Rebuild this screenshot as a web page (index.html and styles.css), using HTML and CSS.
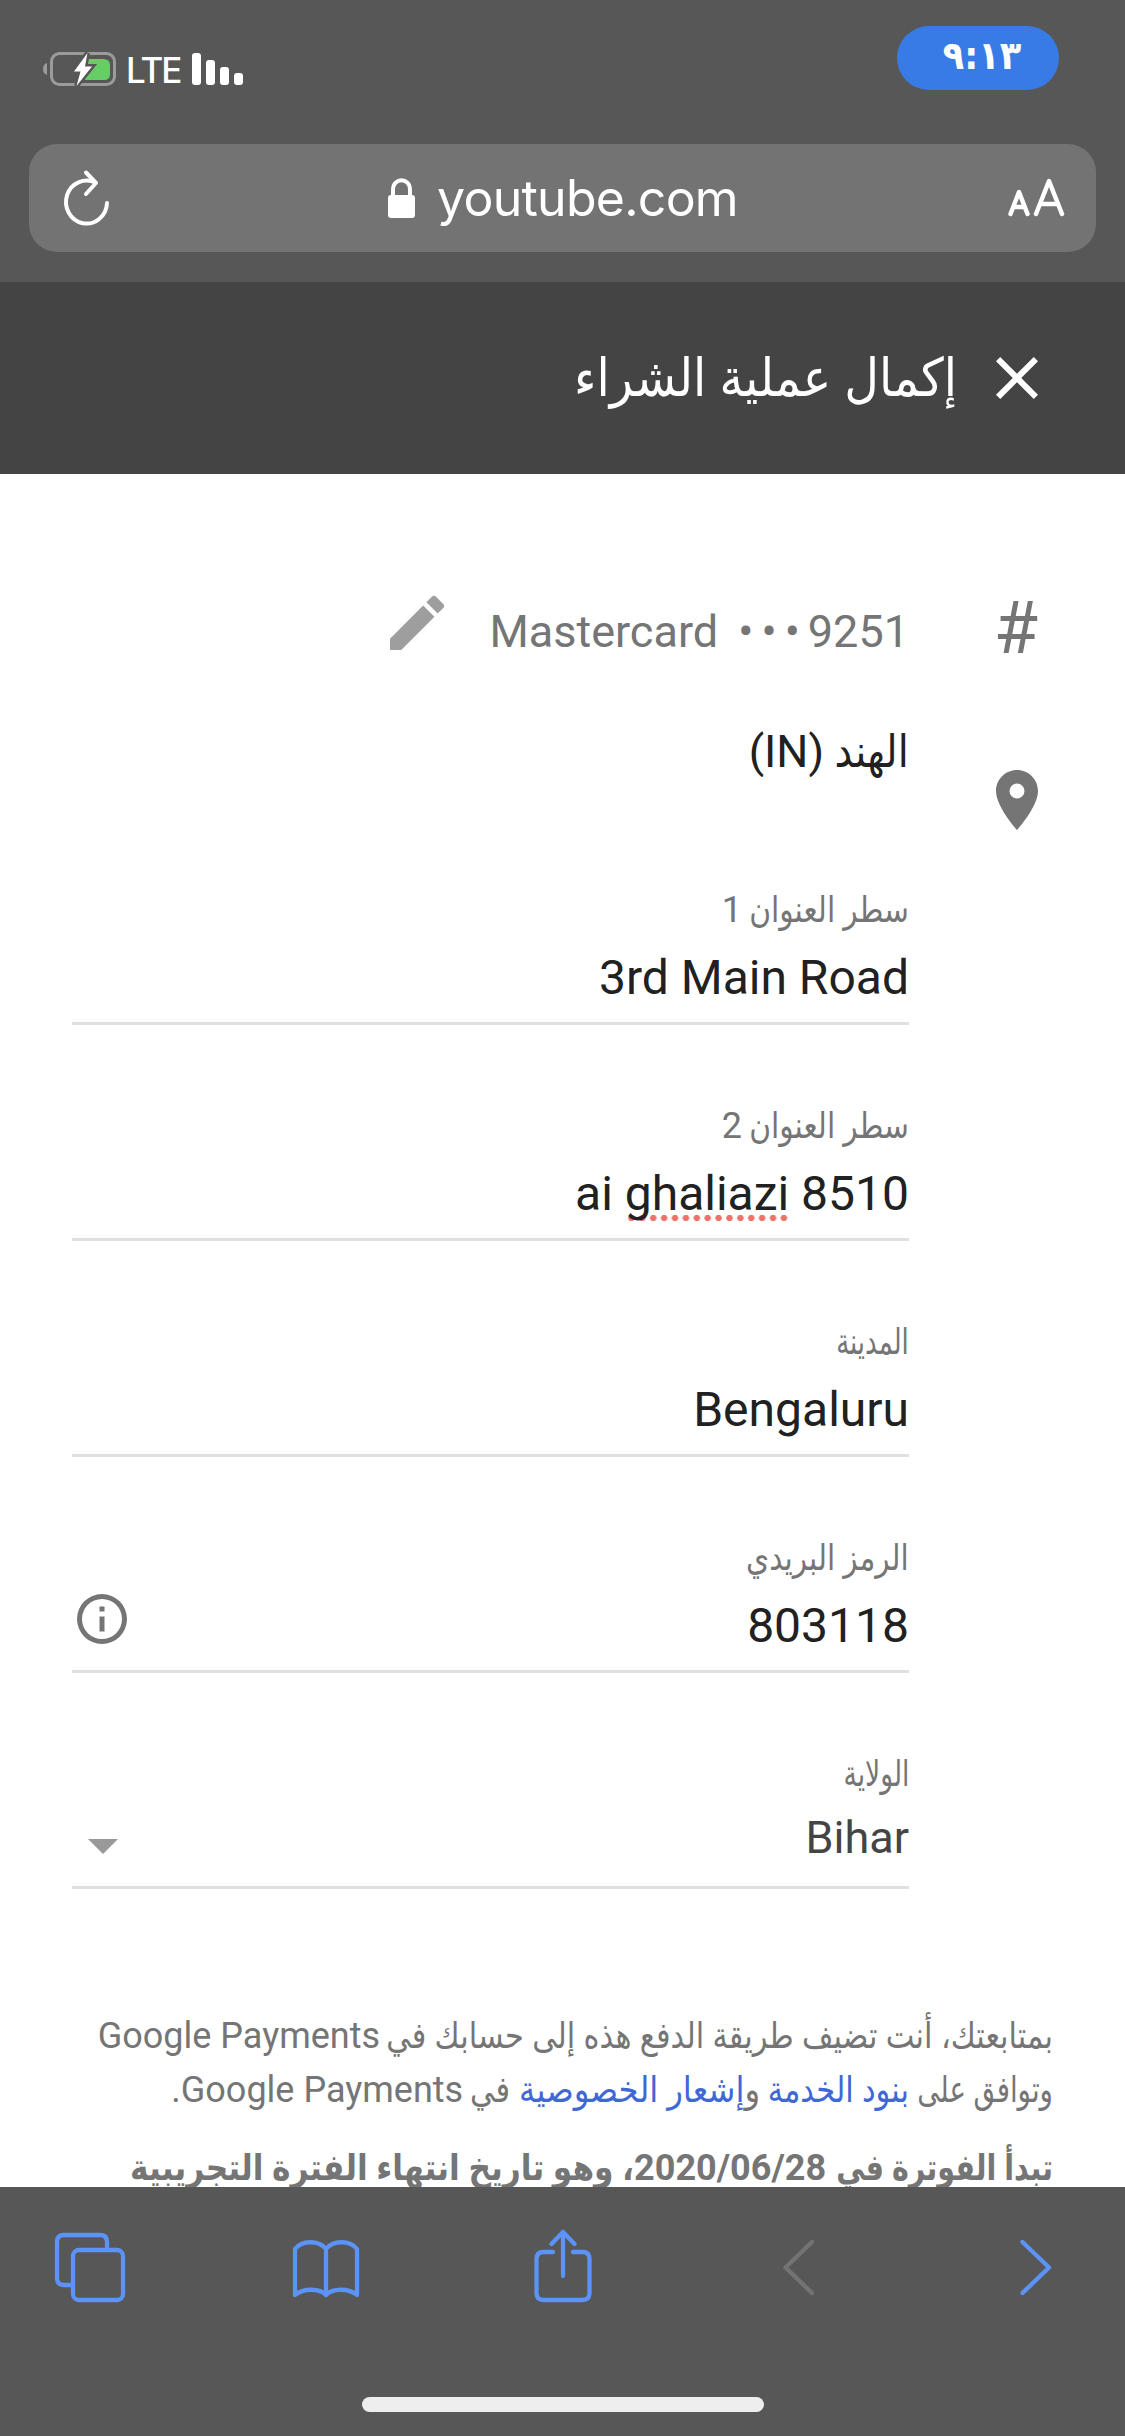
FILE: index.html
```html
<!DOCTYPE html>
<html lang="ar" dir="rtl">
<head>
<meta charset="utf-8">
<title>إكمال عملية الشراء</title>
<link rel="stylesheet" href="styles.css">
</head>
<body>
<header class="chrome">
  <div class="status" dir="ltr">
    <div class="signals">
      <svg class="battery" width="74" height="36" viewBox="0 0 74 36">
        <path d="M4 12v12c-3-1-4-3-4-6s1-5 4-6z" fill="#9b9b9b"/>
        <rect x="8.500" y="2.500" width="63" height="31" rx="8" fill="none" stroke="#9b9b9b" stroke-width="3"/>
        <path d="M45 8h15q7 0 7 6v9q0 6-6 6H42z" fill="#67ce67"/>
        <path d="M44.500 2 31 20.500h6.500L33.500 35 49 15.500h-7z" fill="#fff" stroke="#575757" stroke-width="5" paint-order="stroke"/>
      </svg>
      <span class="carrier">LTE</span>
      <div class="bars"><i class="b4"></i><i class="b3"></i><i class="b2"></i><i class="b1"></i></div>
    </div>
    <div class="clock">٩:١٣</div>
  </div>
  <div class="address" dir="ltr">
    <svg class="reload" width="46" height="56" viewBox="0 0 46 56" fill="none" stroke="#fff" stroke-width="4" stroke-linecap="round" stroke-linejoin="round"><path d="M43 33A20.500 21.500 0 1 1 32 13M22 2.500 32 13 22 24"/></svg>
    <div class="site">
      <svg width="28" height="40" viewBox="0 0 28 40"><rect y="17" width="27" height="23" rx="3" fill="#fff"/><path d="M5 19v-7c0-13 17-13 17 0v7" fill="none" stroke="#fff" stroke-width="4"/></svg>
      <span>youtube.com</span>
    </div>
    <svg class="aa" width="57" height="40" viewBox="0 0 57 40" fill="none" stroke="#fff" stroke-width="4.500" stroke-linecap="round" stroke-linejoin="round"><path d="M2.500 36 11 14l8.500 22M5.500 29h11M28 36 41 3l13 33M32 26h18"/></svg>
  </div>
</header>

<div class="titlebar">
  <svg width="72" height="72" viewBox="0 0 24 24" fill="#fff"><path d="M19 6.410 17.590 5 12 10.590 6.410 5 5 6.410 10.590 12 5 17.590 6.410 19 12 13.410 17.590 19 19 17.590 13.410 12z"/></svg>
  <h1>إكمال عملية الشراء</h1>
</div>

<main>
  <section class="row card">
    <div class="hash">#</div>
    <div class="number" dir="ltr">Mastercard <span class="dots">•••</span>9251</div>
    <svg class="pencil" width="72" height="72" viewBox="0 0 24 24" fill="#9e9e9e"><path d="M3 17.250V21h3.750L17.810 9.940l-3.750-3.750zM20.710 7.040a1 1 0 0 0 0-1.410l-2.340-2.340a1 1 0 0 0-1.410 0l-1.830 1.830 3.750 3.750z"/></svg>
  </section>
  <section class="row">
    <svg class="pin" width="72" height="72" viewBox="0 0 24 24" fill="#757575"><path d="M12 2C8.130 2 5 5.130 5 9c0 5.250 7 13 7 13s7-7.750 7-13c0-3.870-3.130-7-7-7zm0 9.500a2.500 2.500 0 0 1 0-5 2.500 2.500 0 0 1 0 5z"/></svg>
    <div class="form">
      <div class="country"><span class="fit nation">الهند</span> (IN)</div>
      <div class="field"><label><span class="fit line-name">سطر العنوان</span> 1</label><div class="value" dir="ltr">3rd Main Road</div></div>
      <div class="field"><label><span class="fit line-name">سطر العنوان</span> 2</label><div class="value" dir="ltr">ai <span class="misspelt">ghaliazi</span> 8510</div></div>
      <div class="field"><label><span class="fit city">المدينة</span></label><div class="value" dir="ltr">Bengaluru</div></div>
      <div class="field"><label><span class="fit postcode">الرمز البريدي</span></label><div class="value" dir="ltr"><svg class="info" width="60" height="60" viewBox="0 0 24 24" fill="#757575"><path d="M11 7h2v2h-2zm0 4h2v6h-2zm1-9a10 10 0 1 0 0 20 10 10 0 0 0 0-20zm0 18a8 8 0 1 1 0-16 8 8 0 0 1 0 16z"/></svg>803118</div></div>
      <div class="field select"><label><span class="fit state">الولاية</span></label><div class="value" dir="ltr"><svg class="arrow" width="30" height="15" viewBox="0 0 30 15"><path d="M0 0h30L15 15z" fill="#999"/></svg>Bihar</div></div>
    </div>
  </section>
  <section class="legal">
    <p class="l1"><span class="fit adding">بمتابعتك، أنت تضيف طريقة الدفع هذه إلى حسابك في</span> <bdi>Google Payments</bdi></p>
    <p class="l2"><span class="fit agree">وتوافق على</span> <a class="fit terms">بنود الخدمة</a> و<a>إشعار الخصوصية</a> <span class="fit in">في</span> <bdi>Google Payments</bdi>.</p>
    <p class="l3"><span class="fit billing">تبدأ الفوترة في</span> <bdi>2020/06/28</bdi><span class="fit trial">، وهو تاريخ انتهاء الفترة التجريبية</span></p>
  </section>
</main>

<nav class="toolbar" dir="ltr">
  <div class="tools">
    <svg width="72" height="72" viewBox="0 0 72 72"><path d="M17 52H10q-7 0-7-7V9q0-7 7-7h36q7 0 7 7v7"/><rect x="19" y="17" width="50" height="50" rx="6"/></svg>
    <svg width="72" height="72" viewBox="0 0 72 72"><path d="M36 16v46C30 55 13 55 5 62V16c7-9 24-9 31 0 7-9 24-9 31 0v46c-8-7-25-7-31 0"/></svg>
    <svg width="72" height="72" viewBox="0 0 72 72"><path d="M26 19H16.500q-7 0-7 7v34q0 7 7 7h39q7 0 7-7V26q0-7-7-7H46M36 43V-1M24.500 11 36-1l11.500 12"/></svg>
    <svg class="off" width="72" height="72" viewBox="0 0 72 72"><path d="M49 9 22.500 34.500 49 60"/></svg>
    <svg width="72" height="72" viewBox="0 0 72 72"><path d="M23.500 9 50 34.500 23.500 60"/></svg>
  </div>
  <div class="home"></div>
</nav>
</body>
</html>
```
FILE: styles.css
```css
* { box-sizing: border-box; }
body {
  margin: 0;
  width: 1125px;
  height: 2436px;
  overflow: hidden;
  display: flex;
  flex-direction: column;
  background: #fff;
  font-family: Roboto, "DejaVu Sans Condensed", "DejaVu Sans", sans-serif;
  color: #757575;
}
svg { display: block; flex: none; overflow: visible; }
h1, p { margin: 0; white-space: nowrap; }

.chrome { height: 282px; flex: none; background: #575757; color: #fff; }
.status { height: 144px; display: flex; justify-content: space-between; align-items: flex-start; padding: 26px 66px 0 43px; }
.signals { display: flex; padding-top: 25px; }
.carrier { font: 500 35px/36px Inter, sans-serif; letter-spacing: -2px; margin: 1px 0 0 9px; width: 66px; }
.bars { display: flex; align-items: flex-end; gap: 5px; height: 34px; }
.bars i { width: 9px; border-radius: 3px; background: #fff; }
.b4 { height: 32px; }
.b3 { height: 25px; }
.b2 { height: 18px; }
.b1 { height: 12px; }
.clock {
  width: 162px; height: 64px; border-radius: 32px; background: #387be6;
  font: bold 39px/60px "DejaVu Sans Condensed", "DejaVu Sans", sans-serif;
  text-align: center; padding-left: 8px;
}
.address {
  height: 108px; margin: 0 29px; border-radius: 28px; background: #737373;
  display: flex; align-items: center; justify-content: space-between; padding: 0 31px 0 35px;
}
.site { display: flex; align-items: center; gap: 21px; margin-left: 8px; font: 400 50px/60px Inter, sans-serif; letter-spacing: -.75px; }

.titlebar { height: 192px; flex: none; background: #444; color: #fff; display: flex; align-items: center; gap: 24px; padding: 0 72px; }
.titlebar h1 { font-size: 53px; font-weight: 400; line-height: 72px; }

main { height: 1713px; flex: none; overflow: hidden; padding: 113px 72px 0; }
.row { display: flex; align-items: flex-start; gap: 72px; }
.card { height: 135px; }
.hash { width: 72px; text-align: center; font-size: 72px; line-height: 72px; padding: 6px 2px 0 0; }
.number { font-size: 45px; line-height: 60px; padding-top: 15px; white-space: pre; }
.dots { letter-spacing: 8px; margin-left: 9px; }
.pencil { margin-right: -36px; }
.pin { margin-top: 42px; }
.form { width: 837px; }
.country { height: 87px; font-size: 45px; line-height: 60px; color: #212121; }
.field { height: 216px; padding-top: 77px; border-bottom: 3px solid #e0e0e0; }
.field label { display: block; font-size: 36px; line-height: 48px; }
.value { display: flex; justify-content: flex-end; margin-top: 14px; font-size: 48px; line-height: 60px; color: #212121; white-space: pre; }
.misspelt { background: radial-gradient(circle, #ee7268 2.900px, transparent 3.500px) 1px calc(100% - 2px) / 10.900px 8px repeat-x; }
.info { margin: -7px auto 0 0; }
.select .value { margin-top: 10px; font-size: 45px; color: #444; }
.arrow { margin: 31px auto 0 16px; }

.fit { display: inline-block; white-space: nowrap; transform-origin: right; }
.nation { transform: scaleX(.98); margin-left: -2px; }
.line-name { width: 158px; transform: scaleX(.917); }
.city { transform: scaleX(.8); }
.postcode { transform: scaleX(.91); }
.state { transform: scaleX(.82); }
.adding { width: 664px; transform: scaleX(.938); }
.agree { width: 135px; transform: scaleX(.855); }
.terms { width: 140px; transform: scaleX(.94); }
.in { width: 38px; transform: scaleX(.94); }
.billing { width: 218px; transform: scaleX(.883); }
.trial { width: 499px; transform: scaleX(.965); }

.legal { padding-top: 120px; font-size: 36px; line-height: 54px; }
.legal a { color: #3f67d6; }
.legal .l3 { margin-top: 24px; font-weight: 700; }

.toolbar { height: 249px; flex: none; background: #575757; }
.tools { display: flex; justify-content: space-between; padding: 46px 54px 0; }
.tools svg { fill: none; stroke: #5b93f8; stroke-width: 4.300; stroke-linecap: round; stroke-linejoin: round; }
.tools .off { stroke: #737373; }
.home { width: 402px; height: 15px; margin: 92px auto 0; border-radius: 8px; background: #eee; }
```
